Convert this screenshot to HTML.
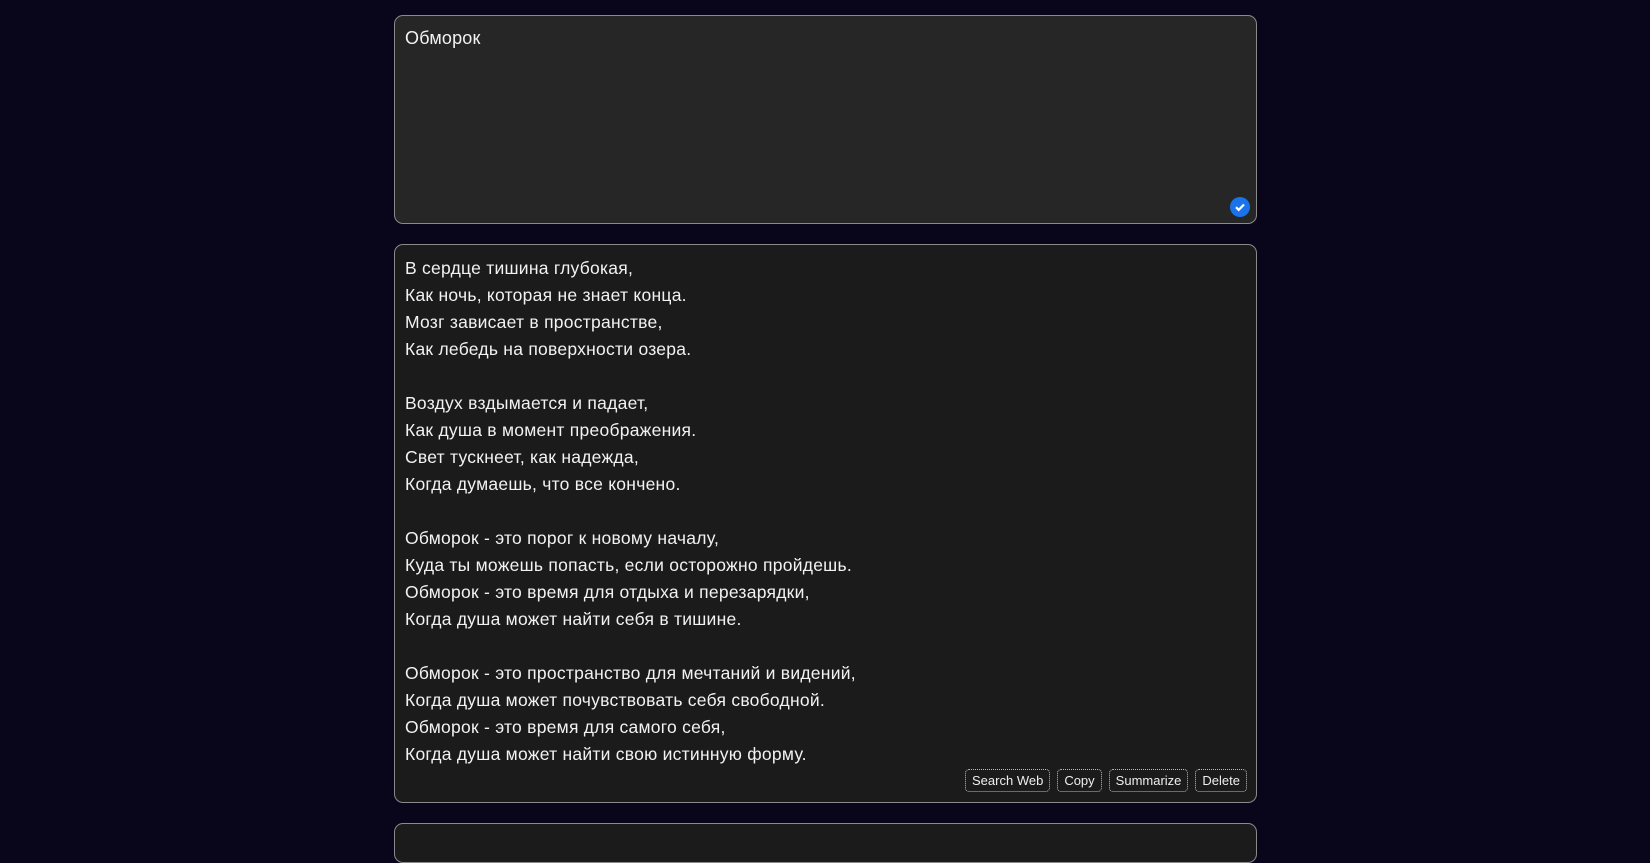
<!DOCTYPE html>
<html><head><meta charset="utf-8"><style>
html,body{margin:0;padding:0;background:#09061b;width:1650px;height:825px;overflow:hidden;font-family:"Liberation Sans","DejaVu Sans",sans-serif;color:#f2f2f2}
.p{position:absolute;left:394px;width:863px;border:1px solid #8a8a8a;border-radius:9px;box-sizing:border-box}
.p1{top:15px;height:209px;background:#262626}
.p2{top:244px;height:559px;background:#1b1b1b}
.p3{top:823px;height:40px;background:#1b1b1b}
.t1{position:absolute;left:10px;top:12px;font-size:18px;letter-spacing:0.2px}
.t2{position:absolute;left:10px;top:10px;font-size:17.5px;line-height:27px;white-space:pre;letter-spacing:0.25px}
.chk{position:absolute;right:6px;bottom:6px;width:20px;height:20px;border-radius:50%;background:#1a73e8}
.btns{position:absolute;right:9px;bottom:10px;display:flex;gap:7px}
.b{border:1px dotted #bbb;border-radius:4px;font-size:13px;padding:3px 6px;color:#eee}
</style></head><body>
<div class="p p1"><div class="t1">Обморок</div>
<div class="chk"><svg width="20" height="20" viewBox="0 0 20 20"><path d="M6 10.2l2.7 2.7L14 7.5" stroke="#fff" stroke-width="2.2" fill="none"/></svg></div></div>
<div class="p p2"><div class="t2">В сердце тишина глубокая,
Как ночь, которая не знает конца.
Мозг зависает в пространстве,
Как лебедь на поверхности озера.

Воздух вздымается и падает,
Как душа в момент преображения.
Свет тускнеет, как надежда,
Когда думаешь, что все кончено.

Обморок - это порог к новому началу,
Куда ты можешь попасть, если осторожно пройдешь.
Обморок - это время для отдыха и перезарядки,
Когда душа может найти себя в тишине.

Обморок - это пространство для мечтаний и видений,
Когда душа может почувствовать себя свободной.
Обморок - это время для самого себя,
Когда душа может найти свою истинную форму.</div>
<div class="btns"><span class="b">Search Web</span><span class="b">Copy</span><span class="b">Summarize</span><span class="b">Delete</span></div></div>
<div class="p p3"></div>
</body></html>
